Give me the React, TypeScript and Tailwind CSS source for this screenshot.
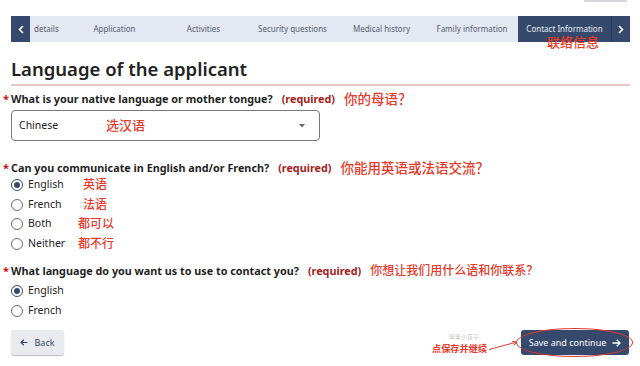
import React from "react";

const tabs = [
  { label: "Application", w: "w-[89px]" },
  { label: "Activities", w: "w-[89px]" },
  { label: "Security questions", w: "w-[89px]" },
  { label: "Medical history", w: "w-[89px]" },
  { label: "Family information", w: "w-[92px]" },
];

function Radio({ label, checked, note, noteClass }: { label: string; checked?: boolean; note?: string; noteClass?: string }) {
  return (
    <div className="flex items-center h-full">
      <span
        className={
          "w-[12px] h-[12px] rounded-full border flex items-center justify-center mr-[5px] bg-white " +
          (checked ? "border-[#34496b]" : "border-[#6b6b6b]")
        }
      >
        {checked && <span className="w-[6px] h-[6px] rounded-full bg-[#34496b]" />}
      </span>
      <span className="w-[50px] text-[10.5px] text-[#222]">{label}</span>
      {note && <span className={"text-[12px] text-[#e8392b] font-medium " + noteClass}>{note}</span>}
    </div>
  );
}

function Question({ text, note, noteSize }: { text: string; note: string; noteSize: string }) {
  return (
    <div className="flex items-center h-[18px] whitespace-nowrap">
      <span className="text-[#d3080c] font-bold text-[11px] -ml-[8px] w-[8px] leading-[18px]">*</span>
      <span className="text-[10.8px] font-bold text-[#1f1f1f] leading-[18px]">{text}</span>
      <span className="text-[10.8px] font-bold text-[#a3221c] ml-[9px] leading-[18px]">(required)</span>
      <span className={noteSize + " text-[#e8392b] ml-[9px] font-medium leading-[18px]"}>{note}</span>
    </div>
  );
}

export default function App() {
  return (
    <div
      className="w-[640px] h-[366px] bg-white overflow-hidden pl-[11px] pr-[10px]"
      style={{ fontFamily: '"Noto Sans", "Noto Sans CJK SC", sans-serif' }}
    >
      <div className="h-[16px] flex justify-end">
        <div className="w-[43px] h-[2px] bg-[#d6d8db] mr-[3px]" />
      </div>

      {/* step nav */}
      <div className="relative flex h-[26px] bg-[#e4e8f3] text-[8px] text-[#56606e]">
        <div className="w-[19px] bg-[#34496b] flex items-center justify-center text-white">
          <svg width="6" height="9" viewBox="0 0 6 9" fill="none" stroke="white" strokeWidth="1.6">
            <path d="M5 1 L1.5 4.5 L5 8" />
          </svg>
        </div>
        <div className="w-[40px] flex items-center pl-[4px] overflow-hidden">details</div>
        {tabs.map((t) => (
          <div key={t.label} className={t.w + " flex items-center justify-center whitespace-nowrap"}>
            {t.label}
          </div>
        ))}
        <div className="w-[93px] bg-[#34496b] text-[#e8ecf3] flex items-center justify-center whitespace-nowrap">
          Contact Information
        </div>
        <div className="w-[19px] bg-[#34496b] border-l border-[#2a3d5a] flex items-center justify-center">
          <svg width="6" height="9" viewBox="0 0 6 9" fill="none" stroke="white" strokeWidth="1.6">
            <path d="M1 1 L4.5 4.5 L1 8" />
          </svg>
        </div>
        <span className="absolute left-[536px] top-[18px] text-[13px] leading-[16px] text-[#ee3a24] font-medium">
          联络信息
        </span>
      </div>

      <h1 className="mt-[14px] text-[18.5px] leading-[26px] font-semibold text-[#222] pb-[2px] border-b-2 border-[#e6c7c7]">
        Language of the applicant
      </h1>

      <div className="mt-[4px]">
        <Question text="What is your native language or mother tongue?" note="你的母语？" noteSize="text-[13.5px]" />
      </div>
      <div className="mt-[2px] w-[309px] h-[31px] border border-[#777] rounded-[4px] flex items-center pl-[7px] pr-[14px]">
        <span className="text-[10.5px] text-[#222] w-[87px]">Chinese</span>
        <span className="text-[13px] text-[#e8392b] font-medium">选汉语</span>
        <svg className="ml-auto" width="6" height="4" viewBox="0 0 6 4">
          <path d="M0 0 H6 L3 3.5 Z" fill="#666" />
        </svg>
      </div>

      <div className="mt-[18px]">
        <Question text="Can you communicate in English and/or French?" note="你能用英语或法语交流？" noteSize="text-[13.5px]" />
      </div>
      <div className="-mt-[1.5px]">
        <div className="h-[19.5px]"><Radio label="English" checked note="英语" noteClass="ml-[5px]" /></div>
        <div className="h-[19.5px]"><Radio label="French" note="法语" noteClass="ml-[5px]" /></div>
        <div className="h-[19.5px]"><Radio label="Both" note="都可以" /></div>
        <div className="h-[19.5px]"><Radio label="Neither" note="都不行" /></div>
      </div>

      <div className="mt-[8.5px]">
        <Question text="What language do you want us to use to contact you?" note="你想让我们用什么语和你联系？" noteSize="text-[12px]" />
      </div>
      <div className="mt-[1px]">
        <div className="h-[20px]"><Radio label="English" checked /></div>
        <div className="h-[20px]"><Radio label="French" /></div>
      </div>

      <div className="mt-[9px] flex justify-between items-start">
        <button className="w-[53px] h-[25px] rounded-[3px] bg-[#e8eaee] shadow-[0_1px_1px_rgba(0,0,0,0.25)] flex items-center justify-center gap-[6px] text-[9px] text-[#34496b]">
          <svg width="8" height="7" viewBox="0 0 8 7" fill="none" stroke="#34496b" strokeWidth="1.2">
            <path d="M7.5 3.5 H1 M3.8 0.8 L1 3.5 L3.8 6.2" />
          </svg>
          Back
        </button>
        <div className="relative mr-[1px]">
          <span className="absolute left-[-72px] top-[3px] text-[6px] text-[#c8c8c8] whitespace-nowrap">笨笨小孩子</span>
          <span className="absolute left-[-89px] top-[13px] text-[9.2px] leading-[12px] font-bold text-[#e8392b] whitespace-nowrap">
            点保存并继续
          </span>
          <svg className="absolute left-[-33px] top-[9px]" width="30" height="12" viewBox="0 0 30 12" fill="none" stroke="#e8392b" strokeWidth="1">
            <path d="M1 10.5 L29 3" />
            <path d="M24 2.5 L29 3 L25.5 6.5" />
          </svg>
          <button className="w-[108px] h-[25px] rounded-[3px] bg-[#34496b] flex items-center justify-center gap-[6px] text-[9px] text-white">
            Save and continue
            <svg width="9" height="8" viewBox="0 0 9 8" fill="none" stroke="white" strokeWidth="1.3">
              <path d="M0.5 4 H8 M4.8 0.8 L8 4 L4.8 7.2" />
            </svg>
          </button>
          <span className="absolute -left-[5px] -right-[4px] -top-[2px] -bottom-[2px] rounded-[50%] border-[1.5px] border-[#e8392b] pointer-events-none" />
        </div>
      </div>
    </div>
  );
}
